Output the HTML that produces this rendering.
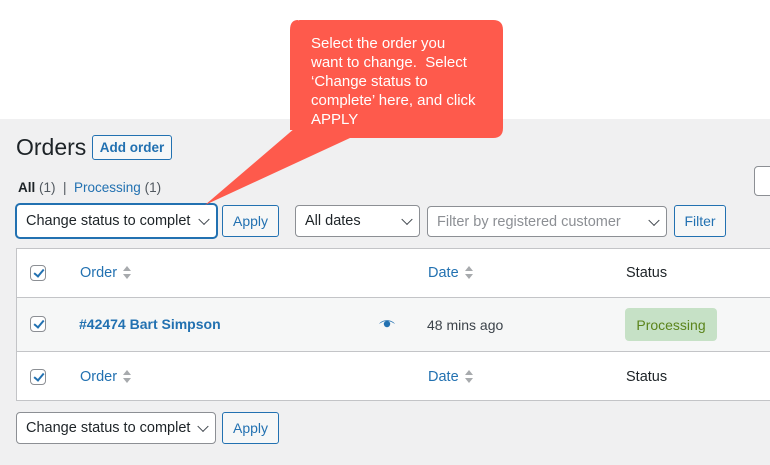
<!DOCTYPE html>
<html><head><style>
*{box-sizing:border-box;margin:0;padding:0}
body{width:770px;height:465px;overflow:hidden;background:#f0f0f1;font-family:"Liberation Sans",sans-serif;position:relative;color:#1d2327}
.a{position:absolute}
.top{left:0;top:0;width:770px;height:119px;background:#fff}
.btn{position:absolute;border:1px solid #2271b1;border-radius:3px;background:#f6f7f7;color:#2271b1;font-size:14px;display:flex;align-items:center;justify-content:center}
.sel{position:absolute;border:1px solid #8c8f94;border-radius:4px;background:#fff;font-size:14.5px;display:flex;align-items:center;padding-left:9px}
.chev{position:absolute;right:8px;top:50%;width:8px;height:8px;border-right:1.6px solid #3c434a;border-bottom:1.6px solid #3c434a;transform:translateY(-70%) rotate(45deg)}
.cb{position:absolute;width:16px;height:16px;border:1px solid #8c8f94;border-radius:4px;background:#fff}
.cb:after{content:"";position:absolute;left:4.5px;top:1px;width:4px;height:8px;border-right:2px solid #2271b1;border-bottom:2px solid #2271b1;transform:rotate(40deg)}
.lnk{color:#2271b1;font-size:14.5px}
.sort{display:inline-block;vertical-align:middle;margin-left:6px;width:9px;height:14px;position:relative}
.sort:before,.sort:after{content:"";position:absolute;left:0;border-left:4.5px solid transparent;border-right:4.5px solid transparent}
.sort:before{top:0;border-bottom:5px solid #a7aaad}
.sort:after{top:8px;border-top:5px solid #a7aaad}
</style></head><body>
<div class="a top"></div>
<div class="a" style="left:16px;top:134px;font-size:23px;">Orders</div>
<div class="btn" style="left:92px;top:135px;width:80px;height:25px;font-weight:bold;font-size:13.5px">Add order</div>
<div class="a" style="left:18px;top:180px;font-size:13.5px;color:#50575e"><b style="color:#1d2327">All</b> (1) &nbsp;| &nbsp;<span style="color:#2271b1">Processing</span> (1)</div>
<div class="a" style="left:754px;top:166px;width:30px;height:30px;border:1px solid #8c8f94;border-radius:4px;background:#fff"></div>
<div class="sel" style="left:16px;top:204px;width:201px;height:34px;border-color:#2271b1;box-shadow:0 0 0 1px #2271b1;color:#1d2327">Change status to complet<span class="chev"></span></div>
<div class="btn" style="left:222px;top:205px;width:57px;height:32px">Apply</div>
<div class="sel" style="left:295px;top:205px;width:125px;height:32px">All dates<span class="chev"></span></div>
<div class="sel" style="left:427px;top:206px;width:240px;height:31px;color:#8c8f94">Filter by registered customer<span class="chev"></span></div>
<div class="btn" style="left:674px;top:205px;width:52px;height:32px">Filter</div>
<div class="a" style="left:16px;top:248px;width:760px;height:153px;background:#fff;border:1px solid #c3c4c7"></div>
<div class="a" style="left:17px;top:297px;width:760px;height:55px;background:#f6f7f7;border-top:1px solid #c3c4c7;border-bottom:1px solid #c3c4c7"></div>
<div class="cb" style="left:30px;top:265px"></div>
<div class="cb" style="left:30px;top:316px"></div>
<div class="cb" style="left:30px;top:369px"></div>
<div class="a lnk" style="left:80px;top:265px">Order<span class="sort"></span></div>
<div class="a lnk" style="left:428px;top:265px">Date<span class="sort"></span></div>
<div class="a" style="left:626px;top:265px;font-size:14.5px">Status</div>
<div class="a lnk" style="left:79px;top:316px;font-weight:bold;font-size:14px">#42474 Bart Simpson</div>
<svg class="a" style="left:379px;top:319px" width="16" height="10" viewBox="0 0 16 10"><path d="M0 5C3 0 13 0 16 5C13 3 11 2 8 2S3 3 0 5Z" fill="#2271b1"/><circle cx="8" cy="5" r="3.2" fill="#2271b1"/></svg>
<div class="a" style="left:427px;top:317px;font-size:14px;color:#3c434a">48 mins ago</div>
<div class="a" style="left:625px;top:308px;width:92px;height:33px;background:#c6e1c6;border-radius:4px;color:#5b841b;font-size:14px;display:flex;align-items:center;justify-content:center">Processing</div>
<div class="a lnk" style="left:80px;top:369px">Order<span class="sort"></span></div>
<div class="a lnk" style="left:428px;top:369px">Date<span class="sort"></span></div>
<div class="a" style="left:626px;top:369px;font-size:14.5px">Status</div>
<div class="sel" style="left:16px;top:412px;width:200px;height:32px">Change status to complet<span class="chev"></span></div>
<div class="btn" style="left:222px;top:412px;width:57px;height:32px">Apply</div>
<svg class="a" style="left:0;top:0" width="770" height="465"><path d="M300 20H493Q503 20 503 30V128Q503 138 493 138H350L205 205L295 128V30Q295 20 300 20Z" fill="#fe5a4c"/><path d="M298 20Q290 20 290 30V130L300 130" fill="#fe5a4c"/></svg>
<div class="a" style="left:311px;top:34px;color:#fff;font-size:15px;line-height:19px;width:166px">Select the order you want to change.&nbsp; Select ‘Change status to complete’ here, and click APPLY</div>
</body></html>
